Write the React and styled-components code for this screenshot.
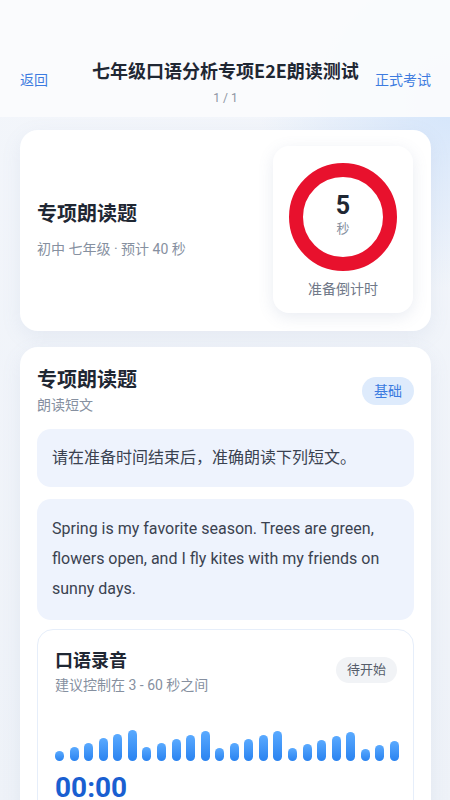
import styled, { createGlobalStyle } from "styled-components";

const GlobalStyle = createGlobalStyle`
  * { box-sizing: border-box; }
  body {
    margin: 0;
    font-family: Roboto, "Noto Sans CJK SC", sans-serif;
    background: #f1f4f9;
  }
`;

const bars = [10, 14, 18, 23, 27, 31, 14, 18, 22, 26, 30, 13, 18, 22, 26, 30, 13, 17, 21, 25, 29, 12, 16, 20];

const Page = styled.div`
  min-height: 100vh;
  background:
    radial-gradient(circle at 100% 12%, #d4e5fb 0, rgba(212, 229, 251, 0) 190px),
    linear-gradient(180deg, #f3f6fb 0%, #eef2f8 100%);
`;

const Header = styled.header`
  height: 117px;
  background: rgba(250, 251, 253, 0.96);
  display: grid;
  grid-template-columns: 70px 1fr 70px;
  align-items: end;
  padding: 0 19px 10px 20px;
`;

const NavLink = styled.span`
  color: #3d7be0;
  font-size: 14px;
  line-height: 20px;
  margin-bottom: 17px;
  justify-self: ${(p) => (p.$right ? "end" : "start")};
  white-space: nowrap;
`;

const TitleBox = styled.div`
  display: flex;
  flex-direction: column;
  align-items: center;
`;

const Title = styled.h1`
  margin: 0;
  font-family: "Noto Sans CJK SC", sans-serif;
  font-size: 18px;
  line-height: 26px;
  font-weight: 700;
  color: #1f2733;
  white-space: nowrap;
`;

const Pager = styled.span`
  font-size: 12px;
  line-height: 18px;
  color: #8d95a3;
  margin-top: 6px;
`;

const Main = styled.main`
  padding: 13px 19px 0 20px;
  display: flex;
  flex-direction: column;
  gap: 16px;
`;

const Card = styled.section`
  background: #fff;
  border-radius: 18px;
  box-shadow: 0 6px 20px rgba(120, 140, 180, 0.1);
  padding: ${(p) => p.$pad || "16px 18px 18px 17px"};
`;

const IntroRow = styled.div`
  display: flex;
  align-items: center;
  justify-content: space-between;
`;

const IntroText = styled.div`
  display: flex;
  flex-direction: column;
  gap: 11px;
`;

const CardTitle = styled.h2`
  margin: 0;
  font-size: 20px;
  line-height: 28px;
  font-weight: 700;
  color: #1f2733;
`;

const Meta = styled.span`
  font-size: ${(p) => p.$size || 14}px;
  line-height: 20px;
  color: #8690a0;
`;

const TimerCard = styled.div`
  width: 140px;
  height: 167px;
  border-radius: 16px;
  background: #fff;
  box-shadow: 0 4px 16px rgba(100, 120, 160, 0.14);
  display: flex;
  flex-direction: column;
  align-items: center;
  padding-top: 17px;
`;

const Ring = styled.div`
  width: 108px;
  height: 108px;
  border-radius: 50%;
  border: 14.5px solid #e8112d;
  display: flex;
  flex-direction: column;
  align-items: center;
  justify-content: center;
`;

const Count = styled.span`
  font-size: 25px;
  line-height: 28px;
  font-weight: 700;
  color: #1f2733;
  margin-top: -4px;
`;

const Unit = styled.span`
  font-size: 13px;
  line-height: 18px;
  color: #8690a0;
`;

const TimerLabel = styled.span`
  margin-top: 8px;
  font-size: 14px;
  line-height: 20px;
  color: #6f7888;
`;

const HeadRow = styled.div`
  display: flex;
  justify-content: space-between;
  align-items: flex-start;
`;

const HeadText = styled.div`
  display: flex;
  flex-direction: column;
  gap: ${(p) => p.$gap || 1}px;
`;

const Badge = styled.span`
  margin-top: 11px;
  padding: 4px 12px;
  border-radius: 14px;
  background: #deebfc;
  color: #3b7be0;
  font-size: 14px;
  line-height: 20px;
`;

const Stack = styled.div`
  margin-top: 14px;
  display: flex;
  flex-direction: column;
  gap: 12px;
`;

const Note = styled.div`
  background: #eef3fd;
  border-radius: 14px;
  padding: ${(p) => p.$pad || "17px 15px"};
  color: #3a4250;
  font-size: 16px;
  line-height: ${(p) => p.$lh || 24}px;
`;

const Recorder = styled.div`
  margin-top: -3px;
  background: #fff;
  border: 1px solid #e6eefa;
  border-radius: 16px;
  padding: 18px 16px 20px 17px;
`;

const RecTitle = styled.h3`
  margin: 0;
  font-size: 18px;
  line-height: 26px;
  font-weight: 700;
  color: #1f2733;
`;

const Pill = styled.span`
  margin-top: 9px;
  padding: 3px 11px;
  border-radius: 14px;
  background: #f1f3f6;
  color: #555d6a;
  font-size: 13px;
  line-height: 20px;
`;

const Wave = styled.div`
  margin-top: 34px;
  height: 32px;
  display: flex;
  align-items: flex-end;
  justify-content: space-between;
  width: 344px;
`;

const Bar = styled.span`
  width: 9px;
  border-radius: 5px;
  background: linear-gradient(180deg, #5aaaff 0%, #2a83f0 100%);
`;

const Clock = styled.div`
  margin-top: 11px;
  font-size: 28px;
  line-height: 32px;
  font-weight: 700;
  color: #1a5fd1;
`;

export default function App() {
  return (
    <>
      <GlobalStyle />
      <Page>
        <Header>
          <NavLink>返回</NavLink>
          <TitleBox>
            <Title>七年级口语分析专项E2E朗读测试</Title>
            <Pager>1 / 1</Pager>
          </TitleBox>
          <NavLink $right>正式考试</NavLink>
        </Header>
        <Main>
          <Card>
            <IntroRow>
              <IntroText>
                <CardTitle>专项朗读题</CardTitle>
                <Meta>初中 七年级 · 预计 40 秒</Meta>
              </IntroText>
              <TimerCard>
                <Ring>
                  <Count>5</Count>
                  <Unit>秒</Unit>
                </Ring>
                <TimerLabel>准备倒计时</TimerLabel>
              </TimerCard>
            </IntroRow>
          </Card>
          <Card $pad="19px 17px 0 17px">
            <HeadRow>
              <HeadText>
                <CardTitle>专项朗读题</CardTitle>
                <Meta $size={14}>朗读短文</Meta>
              </HeadText>
              <Badge>基础</Badge>
            </HeadRow>
            <Stack>
              <Note>请在准备时间结束后，准确朗读下列短文。</Note>
              <Note $pad="15px 15px 16px" $lh={30}>
                Spring is my favorite season. Trees are green, flowers open, and I fly kites with my friends on sunny days.
              </Note>
              <Recorder>
                <HeadRow>
                  <HeadText $gap={0}>
                    <RecTitle>口语录音</RecTitle>
                    <Meta>建议控制在 3 - 60 秒之间</Meta>
                  </HeadText>
                  <Pill>待开始</Pill>
                </HeadRow>
                <Wave>
                  {bars.map((h, i) => (
                    <Bar key={i} style={{ height: h }} />
                  ))}
                </Wave>
                <Clock>00:00</Clock>
              </Recorder>
            </Stack>
          </Card>
        </Main>
      </Page>
    </>
  );
}
